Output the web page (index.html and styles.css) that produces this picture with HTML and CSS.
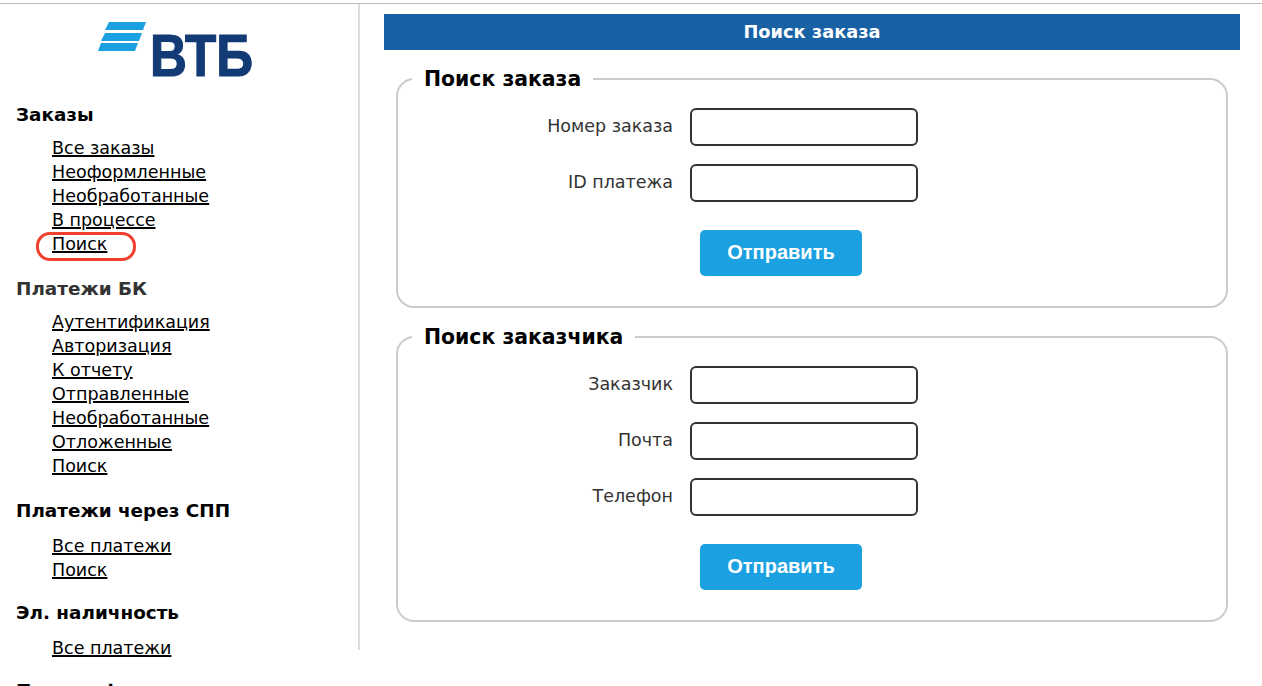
FILE: index.html
```html
<!DOCTYPE html>
<html lang="ru">
<head>
    <meta charset="UTF-8">
    <title>Поиск заказа</title>
    <link rel="stylesheet" href="styles.css">
</head>
<body>
    <div class="page">
        <div class="sidebar">
            <svg class="logo" viewBox="90 10 170 75" width="170" height="75">
                <polygon points="109,22 146,22 143,30 105,30" fill="#1ba1e2"/>
                <polygon points="105,33 142,33 139,41 101,41" fill="#1ba1e2"/>
                <polygon points="101,43 138,43 135,51 98,51" fill="#1ba1e2"/>
                <text x="150" y="76" class="logo-text" textLength="103" lengthAdjust="spacingAndGlyphs">ВТБ</text>
            </svg>

            <h3 class="menu-title">Заказы</h3>
            <ul class="menu">
                <li><a href="#">Все заказы</a></li>
                <li><a href="#">Неоформленные</a></li>
                <li><a href="#">Необработанные</a></li>
                <li><a href="#">В процессе</a></li>
                <li class="marked"><a href="#">Поиск</a></li>
            </ul>

            <h3 class="menu-title gray">Платежи БК</h3>
            <ul class="menu">
                <li><a href="#">Аутентификация</a></li>
                <li><a href="#">Авторизация</a></li>
                <li><a href="#">К отчету</a></li>
                <li><a href="#">Отправленные</a></li>
                <li><a href="#">Необработанные</a></li>
                <li><a href="#">Отложенные</a></li>
                <li><a href="#">Поиск</a></li>
            </ul>

            <h3 class="menu-title">Платежи через СПП</h3>
            <ul class="menu low">
                <li><a href="#">Все платежи</a></li>
                <li><a href="#">Поиск</a></li>
            </ul>

            <h3 class="menu-title">Эл. наличность</h3>
            <ul class="menu low">
                <li><a href="#">Все платежи</a></li>
            </ul>

            <h3 class="menu-title">Прочие функции</h3>
        </div>

        <div class="content">
            <div class="bar">Поиск заказа</div>

            <form class="search">
                <fieldset>
                    <legend>Поиск заказа</legend>
                    <div class="row"><label>Номер заказа</label><input type="text"></div>
                    <div class="row"><label>ID платежа</label><input type="text"></div>
                    <button type="button" class="send">Отправить</button>
                </fieldset>
            </form>

            <form class="search">
                <fieldset>
                    <legend>Поиск заказчика</legend>
                    <div class="row"><label>Заказчик</label><input type="text"></div>
                    <div class="row"><label>Почта</label><input type="text"></div>
                    <div class="row"><label>Телефон</label><input type="text"></div>
                    <button type="button" class="send">Отправить</button>
                </fieldset>
            </form>
        </div>
    </div>
</body>
</html>
```

FILE: styles.css
```css
* {
    margin: 0;
    padding: 0;
    box-sizing: border-box;
}
html, body {
    height: 686px;
    overflow: hidden;
    background: #fff;
}
body {
    font-family: "DejaVu Sans", "Noto Sans", sans-serif;
    font-size: 17.5px;
    color: #000;
    padding-top: 3px;
}
.page {
    display: flex;
    align-items: flex-start;
    border-top: 1px solid #bbb;
}

/* left menu */
.sidebar {
    width: 360px;
    height: 646px;
    padding: 6px 0 0 16px;
    border-right: 2px solid #ddd;
    flex-shrink: 0;
}
.logo {
    display: block;
    margin-left: 74px;
    margin-bottom: 18px;
    overflow: visible;
}
.logo-text {
    font-family: "Liberation Sans", sans-serif;
    font-weight: bold;
    font-size: 59px;
    fill: #123a75;
    stroke: #123a75;
    stroke-width: 1.2px;
}
.menu-title {
    font-size: 18.4px;
    line-height: 24px;
    font-weight: bold;
    margin-bottom: 9px;
}
.gray {
    color: #333;
}
.menu {
    list-style: none;
    padding-left: 36px;
    margin-bottom: 21px;
}
.low {
    margin-top: 11px;
    margin-bottom: 19px;
}
.menu li {
    line-height: 24px;
    position: relative;
}
.menu a {
    color: #000;
    text-decoration-thickness: 2px;
}
.marked:after {
    content: "";
    box-sizing: border-box;
    position: absolute;
    left: -16px;
    top: 0;
    width: 100px;
    height: 29px;
    border: 3px solid #f2402e;
    border-radius: 14px;
}

/* search forms */
.content {
    flex: 1;
    padding: 10px 22px 0 24px;
}
.bar {
    height: 36px;
    line-height: 35px;
    background: #1761a4;
    color: #fff;
    font-size: 17.8px;
    font-weight: bold;
    text-align: center;
}
.search {
    margin: 17px 12px 0 12px;
}
fieldset {
    border: 2px solid #ccc;
    border-radius: 18px;
    padding: 0 0 30px 0;
}
legend {
    margin-left: 14px;
    padding: 0 12px;
    font-size: 20.4px;
    line-height: 24px;
    font-weight: bold;
    margin-bottom: 17px;
}
.row {
    display: flex;
    align-items: center;
    margin-bottom: 18px;
}
.row label {
    width: 275px;
    margin-right: 17px;
    text-align: right;
    color: #333;
    position: relative;
    top: -1px;
}
.row input {
    width: 228px;
    height: 38px;
    border: 2px solid #333;
    border-radius: 6px;
    background: #fff;
}
.send {
    display: block;
    width: 162px;
    height: 46px;
    margin: 28px 0 0 302px;
    padding-bottom: 2px;
    background: #1ba1e2;
    color: #fff;
    border: none;
    border-radius: 5px;
    font-family: "Liberation Sans", sans-serif;
    font-size: 20px;
    font-weight: bold;
}
```
